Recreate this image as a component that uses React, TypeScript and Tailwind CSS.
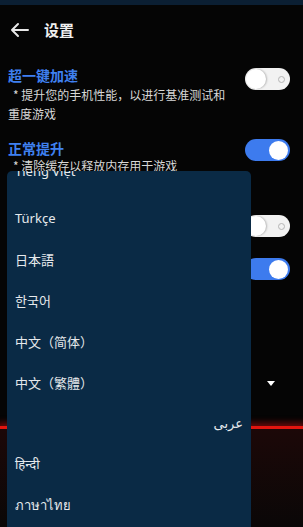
import { type ReactNode } from 'react'

const cjk = '"Noto Sans CJK SC", "Noto Sans", sans-serif'

function Toggle({ on }: { on: boolean }) {
  if (on) {
    return (
      <div className="w-[45px] h-[22px] rounded-full bg-[#3d7bee] flex items-center justify-end pr-[2px]">
        <div className="w-[19px] h-[19px] rounded-full bg-white" />
      </div>
    )
  }
  return (
    <div className="w-[45px] h-[22px] rounded-full bg-[#f2f2f2] flex items-center justify-between pl-[1px] pr-[5px]">
      <div className="w-[20px] h-[20px] rounded-full bg-white shadow-[1px_0_2px_rgba(0,0,0,0.25)]" />
      <div className="w-[7px] h-[7px] rounded-full border-[1.5px] border-[#b5b5b5]" />
    </div>
  )
}

function LangItem({
  children,
  end = false,
  font,
  cut = false,
}: {
  children: ReactNode
  end?: boolean
  font?: string
  cut?: boolean
}) {
  return (
    <div
      className={`h-[41px] flex px-[8px] text-[13px] text-[#e6e9ec] ${end ? 'justify-end text-[11px]' : ''} ${
        cut ? 'items-start pt-[5px]' : 'items-center'
      }`}
      style={{ fontFamily: font ?? cjk }}
    >
      {children}
    </div>
  )
}

export default function App() {
  return (
    <div
      className="relative w-[303px] h-[527px] overflow-hidden bg-[#050505] flex flex-col"
      style={{ fontFamily: cjk }}
    >
      {/* 상태바 */}
      <div className="h-[5px] bg-[#0b1f33]" />

      {/* 헤더 */}
      <div className="h-[50px] flex items-center pl-[10px]">
        <svg width="19" height="16" viewBox="0 0 19 16" fill="none" stroke="#e8e8e8" strokeWidth={2} strokeLinecap="round" strokeLinejoin="round">
          <path d="M18 8H2M8 2L2 8l6 6" />
        </svg>
        <span className="ml-[15px] text-[15px] font-bold text-[#f0f0f0]">设置</span>
      </div>

      {/* 超一键加速 */}
      <div className="mt-[10px] flex justify-between pl-[8px] pr-[13px]">
        <div>
          <div className="text-[14px] leading-[20px] font-bold text-[#3f80f0]">超一键加速</div>
          <div className="text-[12px] leading-[19px] text-[#d8d8d8]">
            <span className="pl-[5px]">* 提升您的手机性能，以进行基准测试和</span>
            <br />
            重度游戏
          </div>
        </div>
        <div className="mt-[3px]">
          <Toggle on={false} />
        </div>
      </div>

      {/* 正常提升 */}
      <div className="mt-[15px] flex justify-between pl-[8px] pr-[13px]">
        <div>
          <div className="text-[14px] leading-[20px] font-bold text-[#3f80f0]">正常提升</div>
          <div className="text-[12px] leading-[16px] text-[#d8d8d8] pl-[5px]">* 清除缓存以释放内存用于游戏</div>
        </div>
        <div className="mt-[1px]">
          <Toggle on />
        </div>
      </div>

      {/* 가려진 설정들 */}
      <div className="mt-[41px] flex justify-end pr-[13px]">
        <Toggle on={false} />
      </div>
      <div className="mt-[21px] flex justify-end pr-[13px]">
        <Toggle on />
      </div>

      <div className="mt-[101px] flex justify-end pr-[28px]">
        <div className="w-0 h-0 border-l-[4px] border-r-[4px] border-t-[5px] border-l-transparent border-r-transparent border-t-white" />
      </div>

      {/* 배경 빨간 라인 */}
      <div className="mt-[40px] h-[3px] bg-[#e3150f] shadow-[0_0_6px_3px_rgba(200,15,15,0.55)]" />
      <div className="flex-1 bg-gradient-to-b from-[#1c0808] to-[#0a0707]" />

      {/* 언어 드롭다운 */}
      <div className="absolute left-[7px] top-[171px] w-[244px] bottom-0 rounded-t-[5px] bg-[#0a2a45] overflow-hidden">
        <div className="-mt-[14px]">
          <LangItem cut font='"Noto Sans", sans-serif'>Tiếng Việt</LangItem>
          <LangItem font='"Noto Sans", sans-serif'>Türkçe</LangItem>
          <LangItem font='"Noto Sans CJK JP", sans-serif'>日本語</LangItem>
          <LangItem font='"Noto Sans CJK KR", sans-serif'>한국어</LangItem>
          <LangItem>中文（简体）</LangItem>
          <LangItem font='"Noto Sans CJK TC", sans-serif'>中文（繁體）</LangItem>
          <LangItem end font='"DejaVu Sans", sans-serif'>عربى</LangItem>
          <LangItem font='"Noto Sans", sans-serif'>हिन्दी</LangItem>
          <LangItem font='"Noto Sans", sans-serif'>ภาษาไทย</LangItem>
        </div>
      </div>
    </div>
  )
}
